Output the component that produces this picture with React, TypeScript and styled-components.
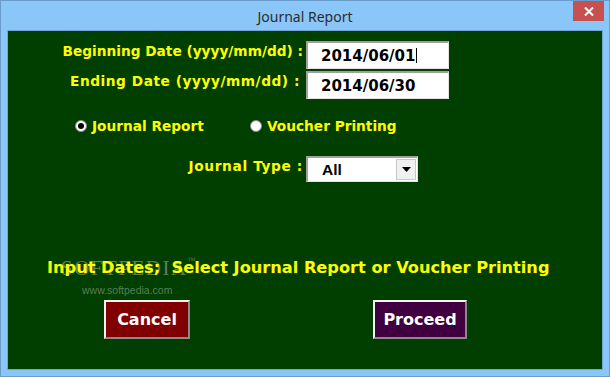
import React from "react";
import styled, { createGlobalStyle } from "styled-components";

const GlobalStyle = createGlobalStyle`
  html, body {
    margin: 0;
    padding: 0;
    background: #8bc6f8;
  }
  * {
    box-sizing: border-box;
  }
`;

const Window = styled.div`
  width: 610px;
  height: 377px;
  display: flex;
  flex-direction: column;
  background: #8bc6f8;
  border: 1px solid #6a9ccb;
`;

const TitleBar = styled.div`
  height: 29px;
  display: grid;
  grid-template-columns: 1fr auto 1fr;
  align-items: start;
`;

const Title = styled.div`
  grid-column: 2;
  padding-top: 6px;
  font-family: "Noto Sans", "Open Sans", sans-serif;
  font-size: 14px;
  color: #2b2b2b;
`;

const CloseButton = styled.div`
  grid-column: 3;
  justify-self: end;
  margin-right: 5px;
  width: 31px;
  height: 20px;
  background: #c75050;
  display: flex;
  align-items: center;
  justify-content: center;
`;

const Panel = styled.div`
  position: relative;
  flex: 1;
  margin: 0 6px 6px 6px;
  border: 1px solid #6fa6d6;
  background: #003f00;
  font-family: "DejaVu Sans", Verdana, sans-serif;
  font-weight: bold;
  color: #ffff00;
`;

const FieldGrid = styled.div`
  position: relative;
  display: grid;
  grid-template-columns: 295px 143px;
  column-gap: 3px;
  row-gap: 2px;
  padding-top: 10px;
`;

const Label = styled.div<{ $track?: number; $shift?: number }>`
  text-align: right;
  font-size: 13.7px;
  line-height: 16px;
  padding-top: 2px;
  padding-right: ${(p) => p.$shift ?? 0}px;
  letter-spacing: ${(p) => p.$track ?? 0}px;
  white-space: nowrap;
`;

const DateBox = styled.div`
  height: 28px;
  background: #fff;
  border-style: solid;
  border-width: 2px 1px 1px 2px;
  border-color: #a0a0a0 #e3e3e3 #e3e3e3 #a0a0a0;
  display: flex;
  align-items: center;
  padding-left: 13px;
  font-size: 15px;
  color: #000;
`;

const Caret = styled.span`
  display: inline-block;
  width: 1px;
  height: 15px;
  margin-left: 1px;
  background: #000;
`;

const RadioRow = styled.div`
  position: relative;
  display: flex;
  align-items: center;
  padding-left: 67px;
  margin-top: 18px;
  height: 17px;
`;

const RadioOption = styled.label<{ $width?: number }>`
  display: flex;
  align-items: center;
  gap: 5px;
  width: ${(p) => (p.$width ? `${p.$width}px` : "auto")};
  font-size: 13.7px;
`;

const RadioCircle = styled.span<{ $checked?: boolean }>`
  width: 12px;
  height: 12px;
  border-radius: 50%;
  background: #fff;
  border: 1px solid #8a8a8a;
  display: flex;
  align-items: center;
  justify-content: center;
  &::after {
    content: "";
    width: 6px;
    height: 6px;
    border-radius: 50%;
    background: ${(p) => (p.$checked ? "#000" : "transparent")};
  }
`;

const TypeGrid = styled(FieldGrid)`
  grid-template-columns: 295px 112px;
  padding-top: 22px;
`;

const Combo = styled.div`
  height: 26px;
  background: #fff;
  border-style: solid;
  border-width: 2px 1px 1px 2px;
  border-color: #a0a0a0 #e3e3e3 #e3e3e3 #a0a0a0;
  display: flex;
  align-items: center;
  justify-content: space-between;
  padding: 0 1px 0 14px;
  font-family: "Liberation Sans", Arial, sans-serif;
  font-size: 15.5px;
  color: #000;
`;

const DropButton = styled.div`
  width: 20px;
  height: 21px;
  background: #f0f0f0;
  border: 1px solid #c8c8c8;
  display: flex;
  align-items: center;
  justify-content: center;
`;

const Message = styled.div`
  position: relative;
  margin-top: 76px;
  padding-left: 39px;
  font-size: 16.2px;
  line-height: 20px;
  white-space: nowrap;
`;

const ButtonRow = styled.div`
  position: relative;
  display: flex;
  margin-top: 22px;
  padding-left: 96px;
  gap: 183px;
`;

const ActionButton = styled.div<{ $bg: string; $width: number }>`
  width: ${(p) => p.$width}px;
  height: 39px;
  background: ${(p) => p.$bg};
  border-style: solid;
  border-width: 2px;
  border-color: #f4f4f4 #8a8a8a #8a8a8a #f4f4f4;
  display: flex;
  align-items: center;
  justify-content: center;
  font-size: 16px;
  color: #fff;
`;

const Watermark = styled.div`
  position: absolute;
  left: 53px;
  top: 225px;
  font-family: "Liberation Serif", serif;
  font-weight: normal;
  font-size: 21px;
  letter-spacing: 1.5px;
  color: rgba(170, 185, 170, 0.55);
  pointer-events: none;
  sup {
    font-size: 8px;
    vertical-align: top;
  }
`;

const WatermarkUrl = styled.div`
  position: absolute;
  left: 74px;
  top: 253px;
  font-family: "Liberation Sans", Arial, sans-serif;
  font-weight: normal;
  font-size: 10.5px;
  color: rgba(150, 170, 150, 0.6);
  pointer-events: none;
`;

export default function App() {
  return (
    <>
      <GlobalStyle />
      <Window>
        <TitleBar>
          <Title>Journal Report</Title>
          <CloseButton>
            <svg width="10" height="9" viewBox="0 0 10 9">
              <path d="M1 0.5 L9 8.5 M9 0.5 L1 8.5" stroke="#fff" strokeWidth="2" />
            </svg>
          </CloseButton>
        </TitleBar>
        <Panel>
          <Watermark>
            SOFTPEDIA<sup>™</sup>
          </Watermark>
          <WatermarkUrl>www.softpedia.com</WatermarkUrl>
          <FieldGrid>
            <Label>Beginning Date (yyyy/mm/dd) :</Label>
            <DateBox>
              2014/06/01
              <Caret />
            </DateBox>
            <Label $track={0.55} $shift={3}>
              Ending Date (yyyy/mm/dd) :
            </Label>
            <DateBox>2014/06/30</DateBox>
          </FieldGrid>
          <RadioRow>
            <RadioOption $width={175}>
              <RadioCircle $checked />
              Journal Report
            </RadioOption>
            <RadioOption>
              <RadioCircle />
              Voucher Printing
            </RadioOption>
          </RadioRow>
          <TypeGrid>
            <Label $track={0.65}>Journal Type :</Label>
            <Combo>
              All
              <DropButton>
                <svg width="9" height="5" viewBox="0 0 9 5">
                  <path d="M0 0 H9 L4.5 5 Z" fill="#000" />
                </svg>
              </DropButton>
            </Combo>
          </TypeGrid>
          <Message>Input Dates;&nbsp; Select Journal Report or Voucher Printing</Message>
          <ButtonRow>
            <ActionButton $bg="#800000" $width={86}>
              Cancel
            </ActionButton>
            <ActionButton $bg="#400040" $width={94}>
              Proceed
            </ActionButton>
          </ButtonRow>
        </Panel>
      </Window>
    </>
  );
}
